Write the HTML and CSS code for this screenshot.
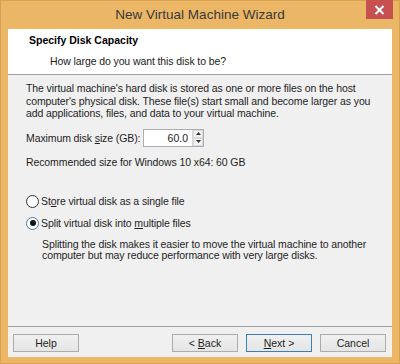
FILE: index.html
```html
<!DOCTYPE html>
<html lang="en">
<head>
    <meta charset="UTF-8">
    <title>New Virtual Machine Wizard</title>
    <link rel="stylesheet" href="styles.css">
</head>
<body>
    <div class="window">
        <div class="titlebar">
            <span class="title">New Virtual Machine Wizard</span>
            <div class="close">
                <svg width="11" height="10" viewBox="0 0 11 10"><path d="M1.5 1 L9.5 9 M9.5 1 L1.5 9" stroke="#fff" stroke-width="2"/></svg>
            </div>
        </div>
        <div class="client">
            <div class="header">
                <div class="header-title">Specify Disk Capacity</div>
                <div class="header-sub">How large do you want this disk to be?</div>
            </div>
            <div class="content">
                <p class="intro">The virtual machine's hard disk is stored as one or more files on the host computer's physical disk. These file(s) start small and become larger as you add applications, files, and data to your virtual machine.</p>
                <div class="size-row">
                    <label for="disk_size">Maximum disk <u>s</u>ize (GB):</label>
                    <div class="spin">
                        <input type="text" id="disk_size" value="60.0">
                        <div class="spin-buttons">
                            <span class="spin-btn"><svg width="5" height="3" viewBox="0 0 5 3"><path d="M0 3 L2.5 0 L5 3 Z" fill="#333"/></svg></span>
                            <span class="spin-btn"><svg width="5" height="3" viewBox="0 0 5 3"><path d="M0 0 L2.5 3 L5 0 Z" fill="#333"/></svg></span>
                        </div>
                    </div>
                </div>
                <p class="recommend">Recommended size for Windows 10 x64: 60 GB</p>
                <div class="options">
                    <div class="radio-row">
                        <span class="radio"></span>
                        <span>St<u>o</u>re virtual disk as a single file</span>
                    </div>
                    <div class="radio-row">
                        <span class="radio checked"></span>
                        <span>Split virtual disk into <u>m</u>ultiple files</span>
                    </div>
                    <p class="radio-note">Splitting the disk makes it easier to move the virtual machine to another computer but may reduce performance with very large disks.</p>
                </div>
            </div>
            <div class="footer">
                <button class="btn">Help</button>
                <div class="nav-buttons">
                    <button class="btn">&lt; <u>B</u>ack</button>
                    <button class="btn default"><u>N</u>ext &gt;</button>
                    <button class="btn">Cancel</button>
                </div>
            </div>
        </div>
    </div>
</body>
</html>
```

FILE: styles.css
```css
body {
    margin: 0;
    font-family: 'Liberation Sans', Arial, sans-serif;
    font-size: 10.5px;
    letter-spacing: -0.1px;
    color: #1e1e1e;
}
.window {
    width: 400px;
    height: 364px;
    box-sizing: border-box;
    background: #ebb665;
    border: 1px solid #d9a24f;
    display: flex;
    flex-direction: column;
    position: relative;
}
.titlebar {
    height: 28px;
    display: flex;
    align-items: center;
    justify-content: center;
}
.title {
    font-size: 13.5px;
    letter-spacing: 0;
    color: #3a3a3a;
    margin-top: -2px;
}
.close {
    position: absolute;
    top: -1px;
    right: 6px;
    width: 27px;
    height: 19px;
    background: #c75050;
    display: flex;
    align-items: center;
    justify-content: center;
}
.client {
    flex: 1;
    margin: 0 7px 6px 7px;
    background: #f0f0f0;
    display: flex;
    flex-direction: column;
}
.header {
    background: #fff;
    height: 46px;
    border-bottom: 1px solid #a0a0a0;
    padding: 5px 0 0 21px;
    box-sizing: border-box;
}
.header-title {
    font-weight: bold;
    font-size: 10.5px;
    letter-spacing: 0;
    color: #000;
}
.header-sub {
    margin: 9px 0 0 21px;
    color: #222;
}
.content {
    flex: 1;
    padding: 7px 18px 0 18px;
}
.intro {
    margin: 0;
    line-height: 12.5px;
}
.size-row {
    display: flex;
    align-items: center;
    margin-top: 9px;
}
.size-row label {
    width: 117px;
}
.spin {
    display: flex;
    width: 61px;
    height: 18px;
    box-sizing: border-box;
    border: 1px solid #abadb3;
    background: #fff;
}
.spin input {
    width: 44px;
    border: none;
    padding: 0 4px 0 0;
    text-align: right;
    font: inherit;
    outline: none;
    color: #1e1e1e;
}
.spin-buttons {
    display: flex;
    flex-direction: column;
    flex: 1;
    border-left: 1px solid #d6d6d6;
}
.spin-btn {
    flex: 1;
    display: flex;
    align-items: center;
    justify-content: center;
    background: #f2f2f2;
    border: 1px solid #dadada;
}
.recommend {
    margin: 9px 0 0 0;
}
.options {
    margin-top: 27px;
}
.radio-row {
    display: flex;
    align-items: center;
    gap: 2px;
    height: 13px;
    margin-bottom: 9px;
}
.radio {
    width: 11px;
    height: 11px;
    border: 1px solid #333;
    border-radius: 50%;
    background: #fff;
    display: flex;
    align-items: center;
    justify-content: center;
}
.radio.checked {
    border-color: #3c7fb1;
}
.radio.checked::after {
    content: "";
    width: 6px;
    height: 6px;
    border-radius: 50%;
    background: #111;
}
.radio-note {
    margin: 5px 0 0 16px;
    line-height: 11px;
}
.footer {
    height: 31px;
    border-top: 1px solid #a0a0a0;
    display: flex;
    justify-content: space-between;
    align-items: flex-start;
    padding: 7px 6px 0 5px;
    box-sizing: border-box;
}
.nav-buttons {
    display: flex;
    gap: 8px;
}
.btn {
    width: 66px;
    height: 18px;
    box-sizing: border-box;
    border: 1px solid #acacac;
    background: linear-gradient(#f0f0f0, #e5e5e5);
    font: inherit;
    color: #1e1e1e;
    padding: 0;
}
.btn.default {
    border-color: #3c7fb1;
}
```
